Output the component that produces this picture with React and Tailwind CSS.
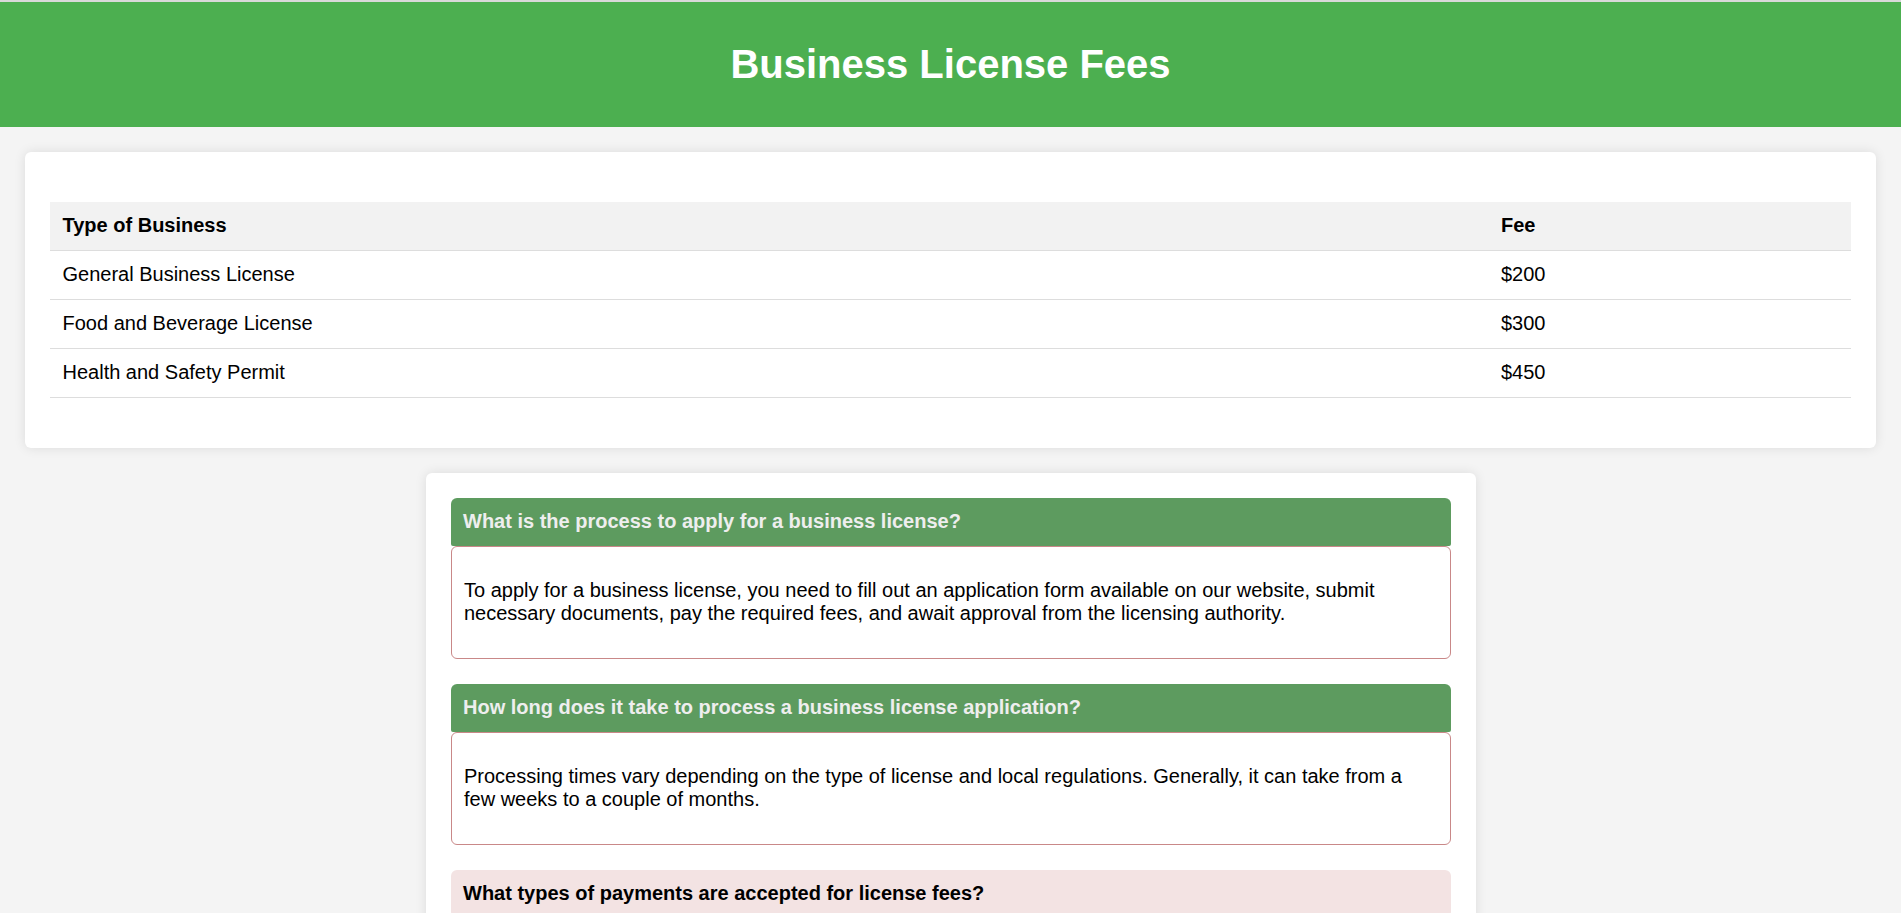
const fees = [
  { type: "General Business License", fee: "$200" },
  { type: "Food and Beverage License", fee: "$300" },
  { type: "Health and Safety Permit", fee: "$450" },
];

const faqs = [
  {
    q: "What is the process to apply for a business license?",
    a: "To apply for a business license, you need to fill out an application form available on our website, submit necessary documents, pay the required fees, and await approval from the licensing authority.",
    open: true,
  },
  {
    q: "How long does it take to process a business license application?",
    a: "Processing times vary depending on the type of license and local regulations. Generally, it can take from a few weeks to a couple of months.",
    open: true,
  },
  {
    q: "What types of payments are accepted for license fees?",
    a: "We accept credit cards, debit cards, and bank transfers for all license fee payments.",
    open: false,
  },
];

export default function App() {
  return (
    <div className="min-h-screen bg-[#f4f4f4] border-t-2 border-[#d9d9d9] font-['Liberation_Sans',Arial,sans-serif] text-[20px] text-black pb-[25px]">
      {/* Header */}
      <header className="bg-[#4caf50] text-white text-center py-[12.5px]">
        <h1 className="text-[40px] leading-[46px] font-bold my-[26.8px]">Business License Fees</h1>
      </header>

      {/* Fees table */}
      <div className="mx-[25px] mt-[25px] bg-white rounded-[6px] shadow-[0_0_12px_rgba(0,0,0,0.1)] p-[25px]">
        <table className="w-full my-[25px] border-collapse text-left">
          <thead>
            <tr className="bg-[#f2f2f2] border-b border-[#dddddd]">
              <th className="w-[79.87%] px-[12.5px] py-[12.5px] leading-[23px] font-bold">Type of Business</th>
              <th className="px-[12.5px] py-[12.5px] leading-[23px] font-bold">Fee</th>
            </tr>
          </thead>
          <tbody>
            {fees.map((row) => (
              <tr key={row.type} className="border-b border-[#dddddd]">
                <td className="px-[12.5px] py-[12.5px] leading-[23px]">{row.type}</td>
                <td className="px-[12.5px] py-[12.5px] leading-[23px]">{row.fee}</td>
              </tr>
            ))}
          </tbody>
        </table>
      </div>

      {/* FAQ */}
      <div className="w-[1050px] mx-auto mt-[25px] bg-white rounded-[6px] shadow-[0_0_12px_rgba(0,0,0,0.1)] p-[25px]">
        {faqs.map((f) => (
          <div key={f.q} className="mb-[25px] last:mb-0">
            {f.open ? (
              <>
                <div className="bg-[#5d9b5f] text-[#eeeeee] font-bold p-[12.5px] leading-[23px] rounded-t-[6px] rounded-b-[2px]">
                  {f.q}
                </div>
                <div className="border border-[#c98888] rounded-[6px] p-[12.5px]">
                  <p className="my-[20px] leading-[23px]">{f.a}</p>
                </div>
              </>
            ) : (
              <div className="bg-[#f3e3e3] text-black font-bold p-[12.5px] leading-[23px] rounded-[6px]">
                {f.q}
              </div>
            )}
          </div>
        ))}
      </div>
    </div>
  );
}
